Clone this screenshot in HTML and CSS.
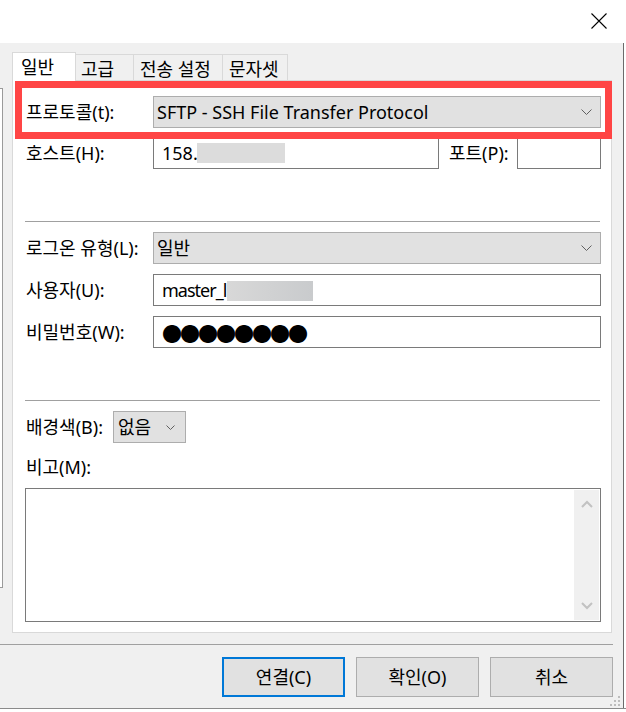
FILE: index.html
```html
<!DOCTYPE html>
<html lang="ko">
<head>
<meta charset="utf-8">
<title>사이트 관리자</title>
<link rel="stylesheet" href="styles.css">
</head>
<body>
<div class="screen">
  <div class="titlebar">
    <svg class="close" width="16" height="16" viewBox="0 0 16 16"><path d="M0.5 0.5L15.5 15.5M15.5 0.5L0.5 15.5" stroke="#000" stroke-width="1.1" fill="none"/></svg>
  </div>
  <div class="window-row">
    <div class="window">
      <div class="main">
        <div class="leftpane"><div class="listbox"></div></div>
        <div class="tabctl">
          <div class="tabs">
            <div class="tab active">일반</div>
            <div class="tab">고급</div>
            <div class="tab t3">전송 설정</div>
            <div class="tab t4">문자셋</div>
          </div>
          <div class="panel">
            <div class="highlight"></div>
            <div class="row first">
              <span class="label">프로토콜(t):</span>
              <div class="combo"><span>SFTP - SSH File Transfer Protocol</span><svg class="chev" width="11" height="6" viewBox="0 0 11 6"><path d="M0.5 0.5L5.5 5.5L10.5 0.5" stroke="#606060" stroke-width="1" fill="none"/></svg></div>
            </div>
            <div class="row host">
              <span class="label">호스트(H):</span>
              <div class="input hostinput"><span>158.</span><span class="blur host-blur"></span></div>
              <span class="portlabel">포트(P):</span>
              <div class="input portinput"></div>
            </div>
            <div class="sep"></div>
            <div class="row">
              <span class="label">로그온 유형(L):</span>
              <div class="combo"><span>일반</span><svg class="chev" width="11" height="6" viewBox="0 0 11 6"><path d="M0.5 0.5L5.5 5.5L10.5 0.5" stroke="#606060" stroke-width="1" fill="none"/></svg></div>
            </div>
            <div class="row">
              <span class="label">사용자(U):</span>
              <div class="input"><span class="user">master_l</span><span class="blur user-blur"></span></div>
            </div>
            <div class="row">
              <span class="label">비밀번호(W):</span>
              <div class="input"><span class="dots">●●●●●●●●</span></div>
            </div>
            <div class="sep"></div>
            <div class="row">
              <span class="label short">배경색(B):</span>
              <div class="combo small"><span>없음</span><svg class="chev" width="9" height="5" viewBox="0 0 9 5"><path d="M0.5 0.5L4.5 4.5L8.5 0.5" stroke="#606060" stroke-width="1" fill="none"/></svg></div>
            </div>
            <div class="memo-label">비고(M):</div>
            <div class="textarea">
              <div class="scrollbar">
                <div class="sbtn"><svg width="12" height="8" viewBox="0 0 12 8"><path d="M1 7L6 2L11 7" stroke="#c2c2c2" stroke-width="2" fill="none"/></svg></div>
                <div class="sbtn"><svg width="12" height="8" viewBox="0 0 12 8"><path d="M1 1L6 6L11 1" stroke="#c2c2c2" stroke-width="2" fill="none"/></svg></div>
              </div>
            </div>
          </div>
        </div>
      </div>
      <div class="bottom-sep"></div>
      <div class="buttons">
        <div class="btn default">연결(C)</div>
        <div class="btn">확인(O)</div>
        <div class="btn">취소</div>
      </div>
      <svg class="grip" width="12" height="12" viewBox="0 0 12 12">
        <rect x="9" y="1" width="2" height="2" fill="#bdbdbd"/>
        <rect x="5" y="5" width="2" height="2" fill="#bdbdbd"/>
        <rect x="9" y="5" width="2" height="2" fill="#bdbdbd"/>
        <rect x="1" y="9" width="2" height="2" fill="#bdbdbd"/>
        <rect x="5" y="9" width="2" height="2" fill="#bdbdbd"/>
        <rect x="9" y="9" width="2" height="2" fill="#bdbdbd"/>
      </svg>
    </div>
    <div class="outside"></div>
  </div>
  <div class="bottom-strip"></div>
</div>
</body>
</html>
```
FILE: styles.css
```css
* { box-sizing: border-box; margin: 0; padding: 0; }
html, body { width: 626px; height: 712px; overflow: hidden; }
body {
  font-family: "Noto Sans", "Noto Sans CJK KR", sans-serif;
  font-size: 18px;
  line-height: 24px;
  color: #000;
  background: #fff;
}
.screen { display: flex; flex-direction: column; height: 712px; }
.titlebar {
  height: 43px;
  flex: none;
  background: #fff;
  display: flex;
  justify-content: flex-end;
  align-items: flex-start;
  padding: 13px 19px 0 0;
}
.window-row { display: flex; height: 665px; flex: none; }
.window {
  width: 623px;
  flex: none;
  background: #f0f0f0;
  display: flex;
  flex-direction: column;
  padding-top: 9px;
  position: relative;
}
.outside { flex: 1; background: #fff; border-left: 1px solid #6b6b6b; }
.main { display: flex; }
.leftpane { width: 12px; flex: none; }
.listbox {
  margin-top: 36px;
  width: 3px;
  height: 500px;
  background: #fff;
  border: 1px solid #9a9a9a;
  border-left: none;
}
.tabctl { width: 600px; display: flex; flex-direction: column; }
.tabs {
  display: flex;
  align-items: flex-end;
  height: 28px;
  position: relative;
  z-index: 1;
}
.tab {
  height: 26px;
  border-top: 1px solid #d9d9d9;
  border-right: 1px solid #d9d9d9;
  background: #f0f0f0;
  padding: 2px 0 0 5px;
  width: 58px;
  white-space: nowrap;
}
.tab.active {
  height: 29px;
  width: 64px;
  margin-bottom: -1px;
  background: #fff;
  border-left: 1px solid #d9d9d9;
  padding: 2px 0 0 8px;
}
.tab.t3 { width: 89px; padding-left: 6px; }
.tab.t4 { width: 65px; padding-left: 6px; }
.panel {
  position: relative;
  width: 600px;
  height: 553px;
  background: #fff;
  border: 1px solid #d9d9d9;
  padding: 15px 10px 10px 12px;
  display: flex;
  flex-direction: column;
}
.highlight {
  position: absolute;
  left: 2px;
  top: 0;
  width: 597px;
  height: 58px;
  border: 7px solid #ff4545;
  pointer-events: none;
  z-index: 2;
}
.row { display: flex; align-items: center; height: 32px; flex: none; }
.row + .row { margin-top: 10px; }
.row.host { margin-top: 9px; }
.label { width: 128px; flex: none; padding-left: 1px; white-space: nowrap; }
.label.short { width: 88px; }
.combo {
  flex: 1;
  height: 32px;
  background: #e1e1e1;
  border: 1px solid #adadad;
  display: flex;
  align-items: center;
  justify-content: space-between;
  padding: 0 8px 0 3px;
}
.combo.small { flex: none; width: 73px; padding: 0 10px 0 4px; }
.input {
  flex: 1;
  height: 32px;
  background: #fff;
  border: 1px solid #7a7a7a;
  display: flex;
  align-items: center;
  padding-left: 8px;
}
.hostinput { flex: none; width: 286px; }
.portlabel { margin-left: 10px; white-space: nowrap; }
.portinput { flex: none; width: 84px; margin-left: auto; }
.blur { display: inline-block; height: 20px; }
.host-blur { width: 88px; background: #dcdcdc; margin-left: -1px; }
.user { letter-spacing: -1px; }
.user-blur { width: 86px; margin-left: 1px; background: linear-gradient(90deg, #d8d8d8, #c9cbcd); position: relative; top: 1px; }
.dots {
  font-family: "Noto Sans CJK KR", sans-serif;
  font-size: 20px;
  letter-spacing: -2px;
  position: relative;
  top: 2px;
}
.sep { height: 1px; background: #a0a0a0; margin: 52px 1px 10px 0; flex: none; }
.memo-label { margin-top: 12px; height: 24px; padding-left: 1px; flex: none; }
.textarea {
  margin-top: 9px;
  height: 134px;
  flex: none;
  border: 1px solid #7a7a7a;
  background: #fff;
  display: flex;
  justify-content: flex-end;
  padding: 1px;
}
.scrollbar {
  width: 25px;
  background: #f0f0f0;
  display: flex;
  flex-direction: column;
  justify-content: space-between;
}
.sbtn { height: 28px; display: flex; align-items: center; justify-content: center; }
.bottom-sep { height: 1px; width: 613px; background: #a0a0a0; margin-top: 11px; flex: none; }
.buttons {
  display: flex;
  justify-content: flex-end;
  gap: 11px;
  padding-right: 10px;
  margin-top: 12px;
}
.btn {
  width: 123px;
  height: 40px;
  background: #e1e1e1;
  border: 1px solid #adadad;
  display: flex;
  align-items: center;
  justify-content: center;
}
.btn.default { border: 2px solid #0078d7; }
.grip { position: absolute; right: 2px; bottom: 1px; }
.bottom-strip {
  height: 4px;
  flex: none;
  background: #fff;
  border-top: 1px solid #8a8a8a;
}
```
